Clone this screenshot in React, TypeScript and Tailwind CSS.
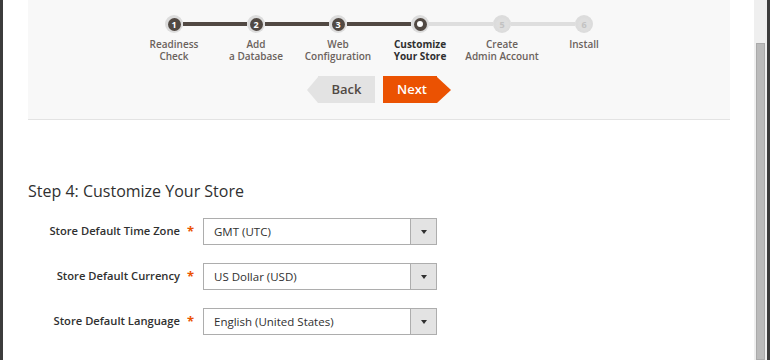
import React from "react";

type Step = { n: number; l1: string; l2?: string; state: "done" | "current" | "todo" };

const steps: Step[] = [
  { n: 1, l1: "Readiness", l2: "Check", state: "done" },
  { n: 2, l1: "Add", l2: "a Database", state: "done" },
  { n: 3, l1: "Web", l2: "Configuration", state: "done" },
  { n: 4, l1: "Customize", l2: "Your Store", state: "current" },
  { n: 5, l1: "Create", l2: "Admin Account", state: "todo" },
  { n: 6, l1: "Install", state: "todo" },
];

function StepItem({ s, i }: { s: Step; i: number }) {
  const leftColor = i === 0 ? "bg-transparent" : s.state === "todo" ? "bg-[#dedede]" : "bg-[#514943]";
  const rightColor =
    i === steps.length - 1 ? "bg-transparent" : s.state === "done" ? "bg-[#514943]" : "bg-[#dedede]";
  return (
    <div className="flex w-[82px] flex-col items-center">
      <div className="flex h-[18px] w-full items-center">
        <div className={`h-[4px] flex-1 ${leftColor}`} />
        <div className="flex h-[18px] w-[18px] items-center justify-center rounded-full bg-[#dcdcdc]">
          {s.state === "done" && (
            <div className="flex h-[13px] w-[13px] items-center justify-center rounded-full bg-[#514943] text-[9px] font-bold leading-none text-white">
              {s.n}
            </div>
          )}
          {s.state === "current" && (
            <div className="flex h-[13px] w-[13px] items-center justify-center rounded-full bg-[#514943]">
              <div className="h-[6px] w-[6px] rounded-full bg-white" />
            </div>
          )}
          {s.state === "todo" && (
            <div className="flex h-[13px] w-[13px] items-center justify-center rounded-full bg-[#dedede] text-[9px] font-bold leading-none text-[#c2c2c2]">
              {s.n}
            </div>
          )}
        </div>
        <div className={`h-[4px] flex-1 ${rightColor}`} />
      </div>
      <div
        className={`mt-[5px] text-center text-[10px] leading-[12px] ${
          s.state === "current" ? "font-bold text-[#303030]" : "font-semibold text-[#6b625c]"
        }`}
      >
        <div>{s.l1}</div>
        {s.l2 && <div>{s.l2}</div>}
      </div>
    </div>
  );
}

function SelectRow({ label, value }: { label: string; value: string }) {
  return (
    <div className="flex items-center">
      <div className="w-[152px] text-right text-[11.2px] font-semibold text-[#303030]">{label}</div>
      <div className="w-[23px] pl-[7px] text-[13px] font-bold leading-none text-[#eb5202]">*</div>
      <div className="flex h-[27px] w-[234px] border border-[#adadad] bg-white">
        <div className="flex flex-1 items-center pl-[10px] text-[11.5px] text-[#303030]">{value}</div>
        <div className="flex w-[26px] items-center justify-center border-l border-[#adadad] bg-[#e3e3e3]">
          <div className="h-0 w-0 border-x-[3.5px] border-t-[4px] border-x-transparent border-t-[#303030]" />
        </div>
      </div>
    </div>
  );
}

export default function App() {
  return (
    <div className="flex h-[360px] w-[770px] overflow-hidden bg-white font-['Open_Sans',sans-serif]">
      <div className="w-[3px] bg-[#3c3c3c]" />
      <div className="flex-1 pl-[25px] pr-[24px]">
        <div className="flex h-[120px] flex-col items-center border-b border-[#e3e3e3] bg-[#f8f8f8] pt-[15px]">
          <div className="flex">
            {steps.map((s, i) => (
              <StepItem key={s.n} s={s} i={i} />
            ))}
          </div>
          <div className="mt-[14px] flex items-center">
            <div className="flex h-[27px] items-center">
              <div className="h-0 w-0 border-y-[13.5px] border-r-[11px] border-y-transparent border-r-[#e3e3e3]" />
              <div className="flex h-[27px] w-[57px] items-center justify-center bg-[#e3e3e3] text-[13px] font-semibold text-[#514943]">
                Back
              </div>
            </div>
            <div className="ml-[8px] flex h-[27px] items-center">
              <div className="flex h-[27px] w-[54px] items-center justify-center bg-[#eb5202] pl-[4px] text-[13px] font-semibold text-white">
                Next
              </div>
              <div className="h-0 w-0 border-y-[13.5px] border-l-[14px] border-y-transparent border-l-[#eb5202]" />
            </div>
          </div>
        </div>
        <div className="mt-[59px] text-[16px] leading-[24px] text-[#303030]">Step 4: Customize Your Store</div>
        <div className="mt-[15px] flex flex-col gap-[18px]">
          <SelectRow label="Store Default Time Zone" value="GMT (UTC)" />
          <SelectRow label="Store Default Currency" value="US Dollar (USD)" />
          <SelectRow label="Store Default Language" value="English (United States)" />
        </div>
      </div>
      <div className="flex w-[13px] flex-col bg-[#efefef] px-[2px]">
        <div className="h-[43px]" />
        <div className="flex-1 border border-[#aaaaaa] bg-[#bbbbbb]" />
      </div>
      <div className="w-[3px] bg-[#3c3c3c]" />
    </div>
  );
}
